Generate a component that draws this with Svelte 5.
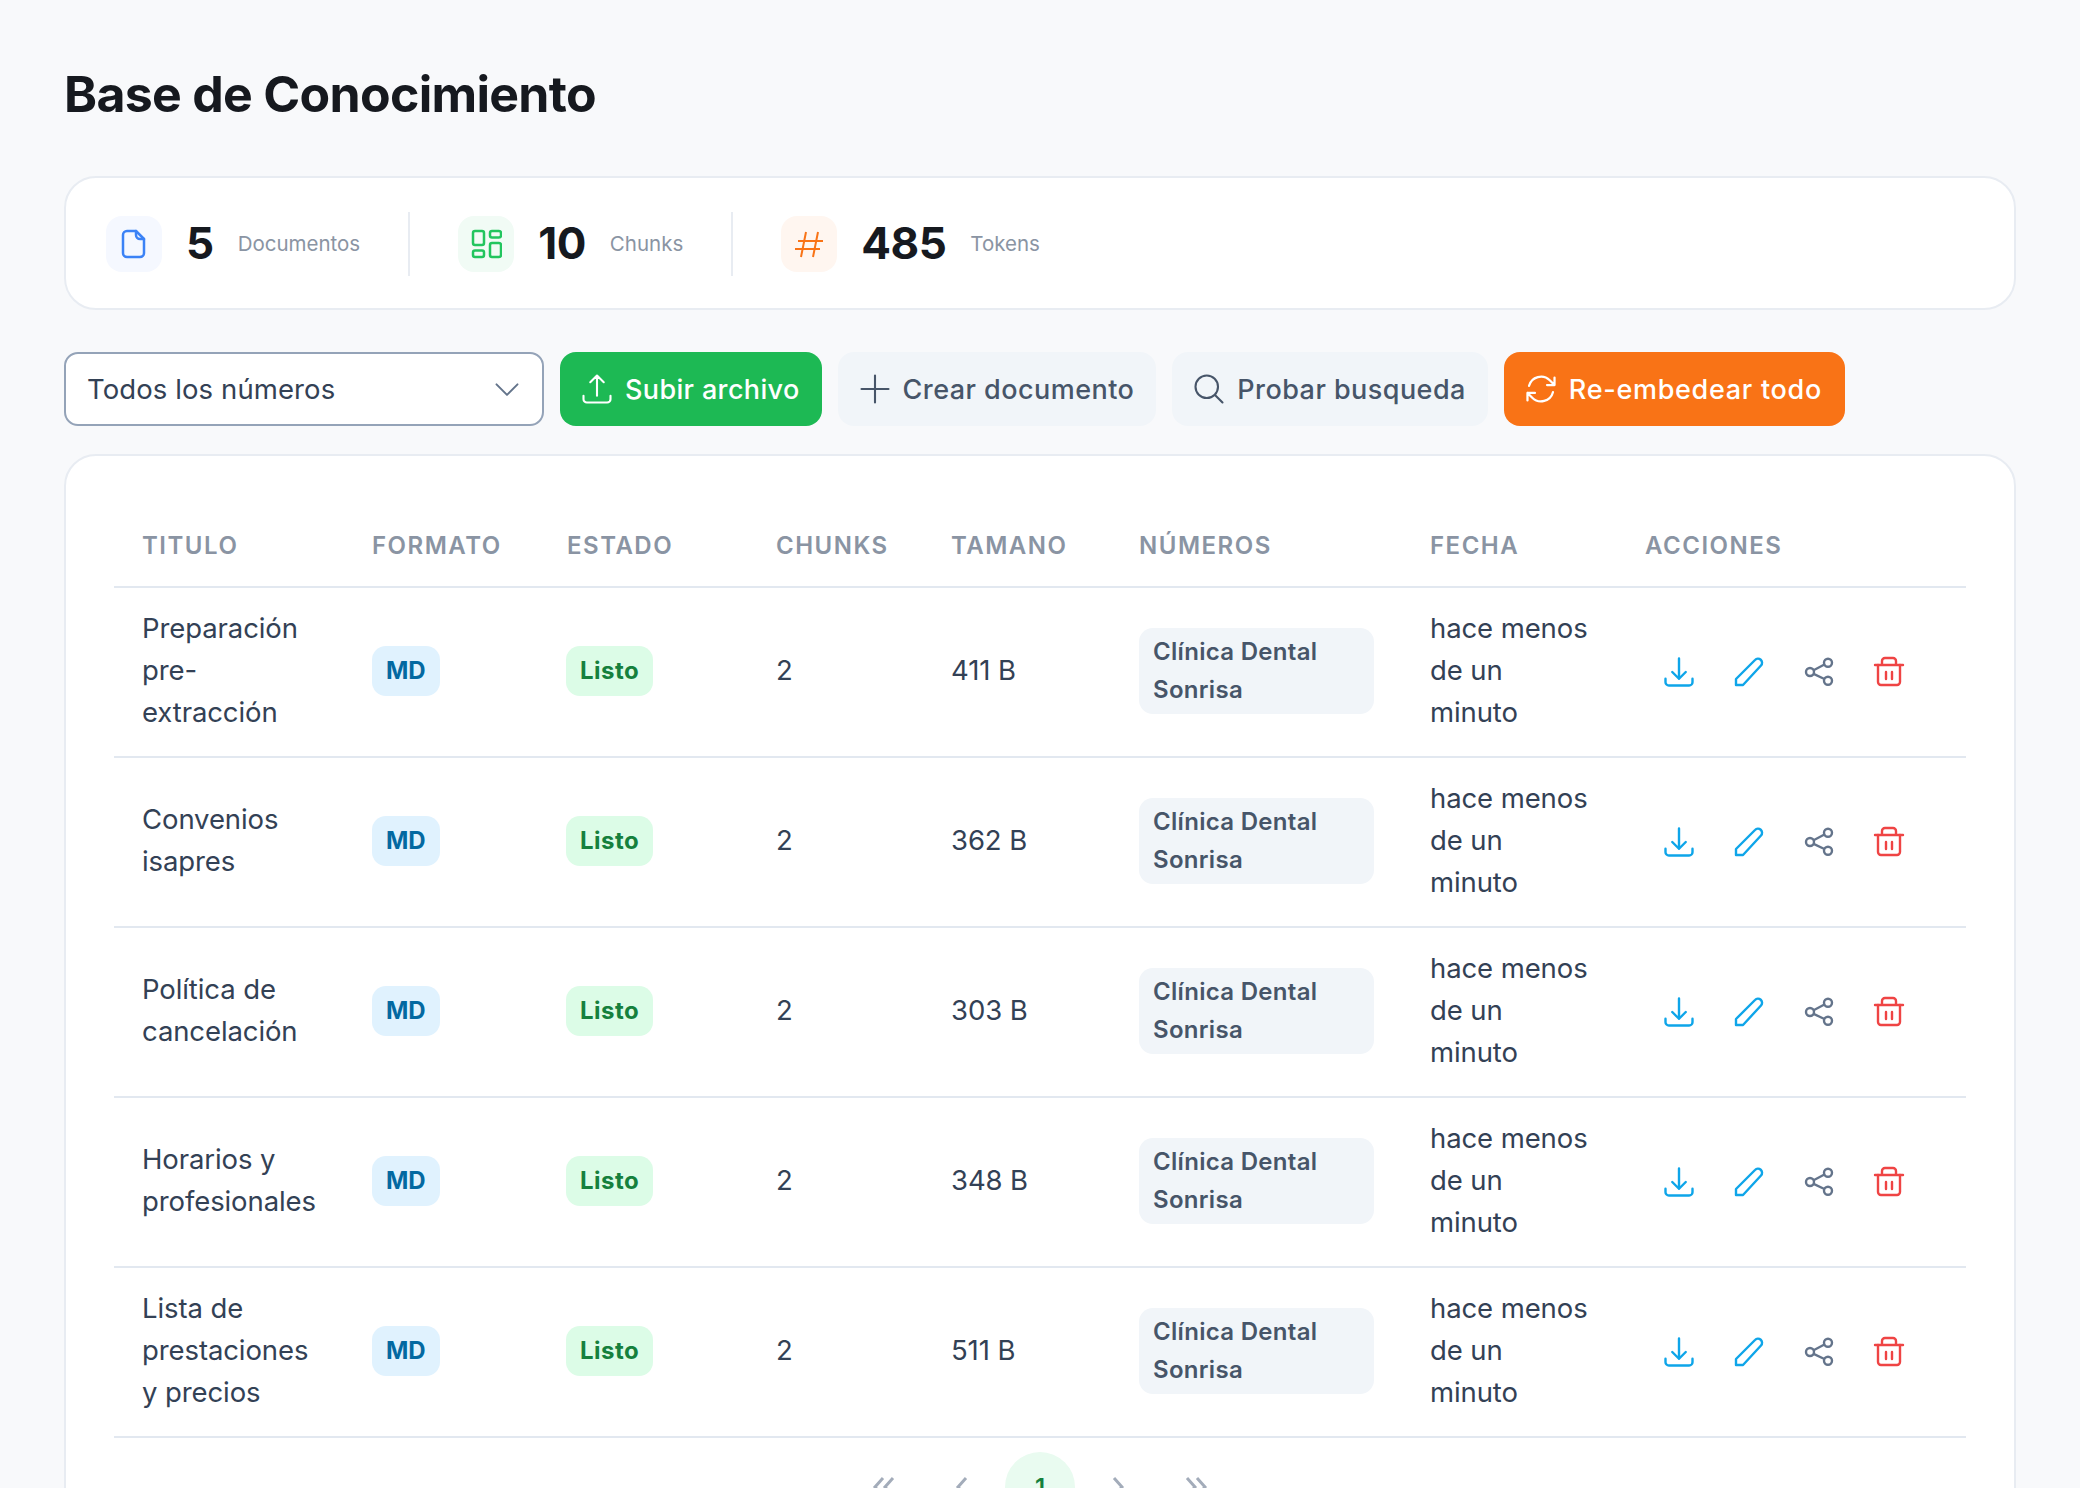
<script lang="ts">
	const stats = [
		{ value: '5', label: 'Documentos', kind: 'doc' },
		{ value: '10', label: 'Chunks', kind: 'grid' },
		{ value: '485', label: 'Tokens', kind: 'hash' }
	];

	const columns = ['Titulo', 'Formato', 'Estado', 'Chunks', 'Tamano', 'Números', 'Fecha', 'Acciones'];

	const docs = [
		{ title: 'Preparación pre-extracción', size: '411 B' },
		{ title: 'Convenios isapres', size: '362 B' },
		{ title: 'Política de cancelación', size: '303 B' },
		{ title: 'Horarios y profesionales', size: '348 B' },
		{ title: 'Lista de prestaciones y precios', size: '511 B' }
	];
</script>

<div class="page">
	<h1>Base de Conocimiento</h1>

	<section class="card stats">
		{#each stats as stat}
			<div class="stat">
				<span class="stat-icon {stat.kind}">
					<svg viewBox="0 0 32 32" width="32" height="32" fill="none" stroke="currentColor" stroke-width="2.500" stroke-linejoin="round" stroke-linecap="round">
						{#if stat.kind === 'doc'}
							<path d="M9 3h9l8 8v14a4 4 0 0 1-4 4H9a4 4 0 0 1-4-4V7a4 4 0 0 1 4-4z" />
							<path d="M18 3v4a4 4 0 0 0 4 4h4" />
						{:else if stat.kind === 'grid'}
							<rect x="3" y="3" width="11" height="14" rx="2" />
							<rect x="20" y="3" width="11" height="6.500" rx="2" />
							<rect x="3" y="22.500" width="11" height="6.500" rx="2" />
							<rect x="20" y="15" width="11" height="14" rx="2" />
						{:else}
							<path d="M5 13h25M2 21h25M13 4 8 29M25 4l-5 25" stroke-width="2" stroke-linecap="butt" />
						{/if}
					</svg>
				</span>
				<span class="stat-value">{stat.value}</span>
				<span class="stat-label">{stat.label}</span>
			</div>
		{/each}
	</section>

	<div class="toolbar">
		<div class="select">
			<span>Todos los números</span>
			<svg viewBox="0 0 24 24" width="28" height="28" fill="none" stroke="currentColor" stroke-width="1.700" stroke-linecap="round" stroke-linejoin="round">
				<path d="m3 8 9 9 9-9" />
			</svg>
		</div>
		<button class="btn green">
			<svg viewBox="0 0 24 24" width="36" height="36" fill="none" stroke="currentColor" stroke-width="1.400" stroke-linecap="round" stroke-linejoin="round">
				<path d="M3 16.500v2.250A2.250 2.250 0 0 0 5.250 21h13.500A2.250 2.250 0 0 0 21 18.750V16.500M7.500 7.500 12 3m0 0 4.500 4.500M12 3v13.500" />
			</svg>
			Subir archivo
		</button>
		<button class="btn soft">
			<svg viewBox="0 0 24 24" width="36" height="36" fill="none" stroke="currentColor" stroke-width="1.400" stroke-linecap="round">
				<path d="M12 3v18M3 12h18" />
			</svg>
			Crear documento
		</button>
		<button class="btn soft">
			<svg viewBox="0 0 24 24" width="36" height="36" fill="none" stroke="currentColor" stroke-width="1.400" stroke-linecap="round" stroke-linejoin="round">
				<path d="m21 21-5.197-5.197m0 0A7.500 7.500 0 1 0 5.196 5.196a7.500 7.500 0 0 0 10.607 10.607Z" />
			</svg>
			Probar busqueda
		</button>
		<button class="btn orange">
			<svg viewBox="0 0 24 24" width="36" height="36" fill="none" stroke="currentColor" stroke-width="1.500" stroke-linecap="round" stroke-linejoin="round">
				<path d="M16.023 9.348h4.992v-.001M2.985 19.644v-4.992m0 0h4.992m-4.993 0 3.181 3.183a8.250 8.250 0 0 0 13.803-3.700M4.031 9.865a8.250 8.250 0 0 1 13.803-3.700l3.181 3.182m0-4.991v4.990" />
			</svg>
			Re-embedear todo
		</button>
	</div>

	<section class="card list">
		<table>
			<colgroup>
				<col style="width: 230px" />
				<col style="width: 195px" />
				<col style="width: 209px" />
				<col style="width: 175px" />
				<col style="width: 188px" />
				<col style="width: 291px" />
				<col style="width: 215px" />
				<col style="width: 349px" />
			</colgroup>
			<thead>
				<tr>
					{#each columns as column}
						<th>{column}</th>
					{/each}
				</tr>
			</thead>
			<tbody>
				{#each docs as doc}
					<tr>
						<td>{doc.title}</td>
						<td><span class="badge format">MD</span></td>
						<td><span class="badge status">Listo</span></td>
						<td>2</td>
						<td>{doc.size}</td>
						<td><span class="chip">Clínica Dental Sonrisa</span></td>
						<td>hace menos de un minuto</td>
						<td>
							<div class="actions">
								<button class="icon-btn sky" aria-label="Descargar">
									<svg viewBox="0 0 24 24" width="36" height="36" fill="none" stroke="currentColor" stroke-width="1.600" stroke-linecap="round" stroke-linejoin="round">
										<path d="M3 16.500v2.250A2.250 2.250 0 0 0 5.250 21h13.500A2.250 2.250 0 0 0 21 18.750V16.500M16.500 12 12 16.500m0 0L7.500 12m4.500 4.500V3" />
									</svg>
								</button>
								<button class="icon-btn sky" aria-label="Editar">
									<svg viewBox="0 0 36 36" width="36" height="36" fill="none" stroke="currentColor" stroke-width="2.400" stroke-linejoin="round">
										<path d="M5 31v-6L24 6a4 4 0 0 1 6 5.500L12 31z" />
									</svg>
								</button>
								<button class="icon-btn slate" aria-label="Compartir">
									<svg viewBox="0 0 36 36" width="36" height="36" fill="none" stroke="currentColor" stroke-width="2.400">
										<circle cx="27" cy="8.700" r="4" />
										<circle cx="9" cy="18" r="4" />
										<circle cx="27" cy="26.700" r="4" />
										<path d="m12.600 16.200 10.800-5.700M12.600 19.800l10.800 5.200" />
									</svg>
								</button>
								<button class="icon-btn red" aria-label="Eliminar">
									<svg viewBox="0 0 36 36" width="36" height="36" fill="none" stroke="currentColor" stroke-width="2.400" stroke-linecap="round" stroke-linejoin="round">
										<path d="M4 11h28M11 11V7a3 3 0 0 1 3-3h8a3 3 0 0 1 3 3v4" />
										<path d="M7 11v17a3 3 0 0 0 3 3h16a3 3 0 0 0 3-3V11" />
										<path d="M15 18v7M21 18v7" />
									</svg>
								</button>
							</div>
						</td>
					</tr>
				{/each}
			</tbody>
		</table>

		<nav class="pager">
			<span class="page-btn">
				<svg viewBox="0 0 28 28" width="28" height="28" fill="none" stroke="currentColor" stroke-width="3">
					<path d="M13 5 5 14l8 9M23 5l-8 9 8 9" />
				</svg>
			</span>
			<span class="page-btn">
				<svg viewBox="0 0 28 28" width="28" height="28" fill="none" stroke="currentColor" stroke-width="3">
					<path d="m18 5-8 9 8 9" />
				</svg>
			</span>
			<span class="page-btn current">1</span>
			<span class="page-btn">
				<svg viewBox="0 0 28 28" width="28" height="28" fill="none" stroke="currentColor" stroke-width="3">
					<path d="m10 5 8 9-8 9" />
				</svg>
			</span>
			<span class="page-btn">
				<svg viewBox="0 0 28 28" width="28" height="28" fill="none" stroke="currentColor" stroke-width="3">
					<path d="m5 5 8 9-8 9M15 5l8 9-8 9" />
				</svg>
			</span>
		</nav>
	</section>
</div>

<style>
	:global(body) {
		margin: 0;
		background: #f8f9fb;
	}

	.page {
		height: 1488px;
		overflow: hidden;
		box-sizing: border-box;
		padding: 64px 64px 0;
		font-family: Inter, 'Noto Sans', sans-serif;
		color: #334155;
		font-size: 27.500px;
		letter-spacing: -0.1px;
	}

	h1 {
		margin: 0 0 52px;
		font-size: 50px;
		line-height: 60px;
		font-weight: 650;
		letter-spacing: -0.7px;
		color: #16191f;
	}

	.card {
		background: #fff;
		border: 2px solid #e8ecf2;
		border-radius: 32px;
	}

	.stats {
		display: flex;
		padding: 34px 40px 32px;
	}

	.stat {
		display: flex;
		align-items: center;
		gap: 24px;
		height: 64px;
		padding-right: 48px;
		border-right: 2px solid #e8ecf2;
		margin-right: 48px;
	}

	.stat:last-child {
		border-right: none;
	}

	.stat-icon {
		display: flex;
		align-items: center;
		justify-content: center;
		width: 56px;
		height: 56px;
		border-radius: 16px;
	}

	.stat-icon.doc {
		background: #f5f8ff;
		color: #3b82f6;
	}

	.stat-icon.grid {
		background: #f1fbf5;
		color: #22c55e;
	}

	.stat-icon.hash {
		background: #fff6f0;
		color: #f97316;
	}

	.stat-value {
		padding-bottom: 2px;
		font-size: 44px;
		font-weight: 700;
		letter-spacing: -0.5px;
		color: #16191f;
	}

	.stat-label {
		padding-bottom: 2px;
		font-size: 20.500px;
		letter-spacing: 0;
		color: #8a94a3;
	}

	.toolbar {
		display: flex;
		gap: 16px;
		margin: 42px 0 28px;
	}

	.select {
		display: flex;
		align-items: center;
		justify-content: space-between;
		box-sizing: border-box;
		width: 480px;
		height: 74px;
		padding: 0 21px;
		background: #fff;
		border: 2px solid #94a3b8;
		border-radius: 14px;
		letter-spacing: 0.1px;
	}

	.select svg {
		color: #64748b;
	}

	.btn {
		display: flex;
		align-items: center;
		gap: 10px;
		height: 74px;
		padding: 0 22px 0 19px;
		border: none;
		border-radius: 16px;
		font: inherit;
		font-size: 27px;
		font-weight: 500;
		letter-spacing: 0.45px;
	}

	.green {
		background: #1db954;
		color: #fff;
		letter-spacing: 0.35px;
	}

	.soft {
		background: #f1f5f9;
		color: #475569;
	}

	.orange {
		padding-right: 23px;
		background: #f97316;
		color: #fff;
		letter-spacing: 0.7px;
	}

	.list {
		height: 1200px;
		padding: 48px;
	}

	table {
		width: 1852px;
		table-layout: fixed;
		border-collapse: collapse;
	}

	th {
		height: 83px;
		padding: 0 28px;
		box-sizing: border-box;
		border-bottom: 2px solid #e2e8f0;
		text-align: left;
		text-transform: uppercase;
		font-size: 24px;
		font-weight: 600;
		letter-spacing: 1.500px;
		color: #8a94a3;
	}

	td {
		height: 170px;
		padding: 0 28px 4px;
		box-sizing: border-box;
		border-bottom: 2px solid #e2e8f0;
		line-height: 42px;
	}

	.badge {
		display: inline-block;
		box-sizing: border-box;
		height: 50px;
		margin-top: 2px;
		padding: 0 14px;
		border-radius: 14px;
		font-size: 24px;
		font-weight: 700;
		line-height: 50px;
		vertical-align: middle;
	}

	.format {
		background: #e0f2fe;
		color: #0369a1;
	}

	.status {
		margin-left: -1px;
		background: #dcfce7;
		color: #15803d;
		letter-spacing: 0.500px;
	}

	.chip {
		display: block;
		box-sizing: border-box;
		width: 235px;
		margin-top: 2px;
		padding: 5px 14px;
		border-radius: 14px;
		background: #f1f5f9;
		color: #475569;
		font-size: 24px;
		font-weight: 600;
		letter-spacing: 0.300px;
		line-height: 38px;
	}

	.actions {
		display: flex;
		gap: 2px;
		margin-top: 4px;
	}

	.icon-btn {
		display: flex;
		align-items: center;
		justify-content: center;
		width: 68px;
		height: 56px;
		padding: 0;
		border: none;
		background: none;
	}

	.sky {
		color: #0ea5e9;
	}

	.slate {
		color: #64748b;
	}

	.red {
		color: #ef4444;
	}

	.pager {
		display: flex;
		justify-content: center;
		gap: 8px;
		margin-top: 14px;
	}

	.page-btn {
		display: flex;
		align-items: center;
		justify-content: center;
		width: 70px;
		height: 70px;
		border-radius: 50%;
		color: #a3acba;
	}

	.current {
		background: #e9fbf0;
		color: #15803d;
		font-size: 24px;
		font-weight: 600;
	}
</style>
